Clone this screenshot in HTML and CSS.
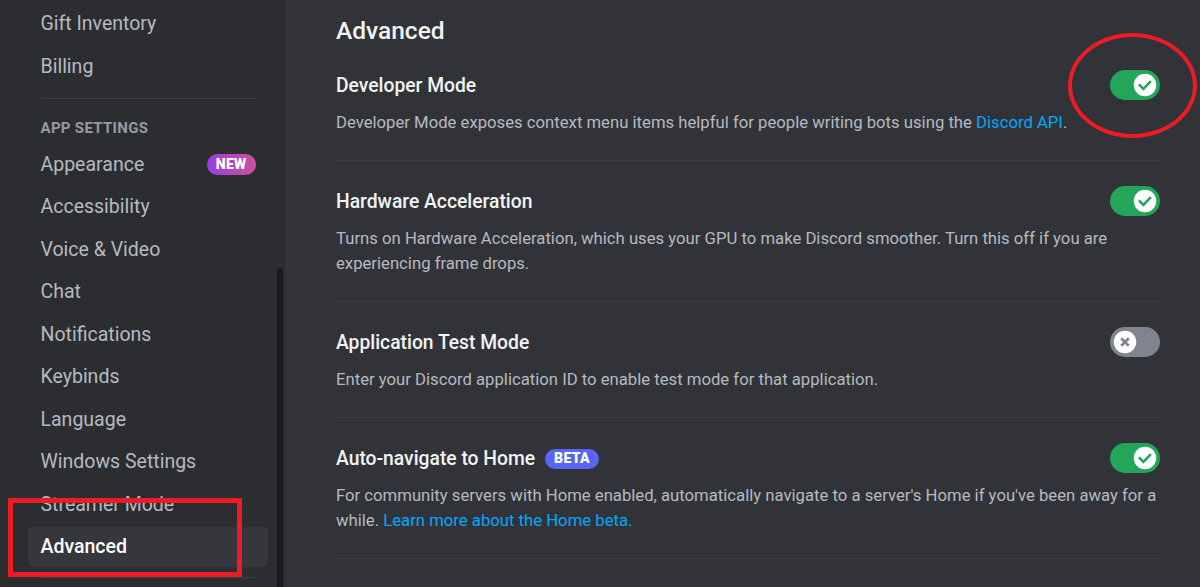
FILE: index.html
```html
<!DOCTYPE html>
<html lang="en">
<head>
<meta charset="utf-8">
<title>Settings - Advanced</title>
<link rel="stylesheet" href="styles.css">
</head>
<body>
<div class="app">
  <aside class="sidebar">
    <nav class="nav">
      <div class="item">Gift Inventory</div>
      <div class="item">Billing</div>
      <div class="sep first"></div>
      <div class="header">App Settings</div>
      <div class="item">Appearance <span class="badge-new">NEW</span></div>
      <div class="item">Accessibility</div>
      <div class="item">Voice &amp; Video</div>
      <div class="item">Chat</div>
      <div class="item">Notifications</div>
      <div class="item">Keybinds</div>
      <div class="item">Language</div>
      <div class="item">Windows Settings</div>
      <div class="item">Streamer Mode</div>
      <div class="item selected">Advanced</div>
      <div class="sep"></div>
    </nav>
    <div class="scroll"><div class="thumb"></div></div>
  </aside>
  <main class="content">
    <div class="column">
      <h2 class="title">Advanced</h2>

      <section class="setting">
        <div class="row">
          <div class="label">Developer Mode</div>
          <svg class="switch on" viewBox="0 0 40 24" width="50" height="30"><rect x="0" y="0" width="40" height="24" rx="12"/><circle cx="28" cy="12" r="9" fill="#fff"/><path d="M23.8 12.2l2.9 2.9 5.3-5.5" fill="none" stroke="#23a55a" stroke-width="2" stroke-linecap="square"/></svg>
        </div>
        <div class="desc">Developer Mode exposes context menu items helpful for people writing bots using the <a class="link">Discord API</a>.</div>
      </section>

      <section class="setting">
        <div class="row">
          <div class="label">Hardware Acceleration</div>
          <svg class="switch on" viewBox="0 0 40 24" width="50" height="30"><rect x="0" y="0" width="40" height="24" rx="12"/><circle cx="28" cy="12" r="9" fill="#fff"/><path d="M23.8 12.2l2.9 2.9 5.3-5.5" fill="none" stroke="#23a55a" stroke-width="2" stroke-linecap="square"/></svg>
        </div>
        <div class="desc">Turns on Hardware Acceleration, which uses your GPU to make Discord smoother. Turn this off if you are experiencing frame drops.</div>
      </section>

      <section class="setting">
        <div class="row">
          <div class="label">Application Test Mode</div>
          <svg class="switch off" viewBox="0 0 40 24" width="50" height="30"><rect x="0" y="0" width="40" height="24" rx="12"/><circle cx="12" cy="12" r="9" fill="#fff"/><path d="M9 9l6 6M15 9l-6 6" fill="none" stroke="#80848e" stroke-width="2.2"/></svg>
        </div>
        <div class="desc">Enter your Discord application ID to enable test mode for that application.</div>
      </section>

      <section class="setting">
        <div class="row">
          <div class="label">Auto-navigate to Home <span class="badge-beta">BETA</span></div>
          <svg class="switch on" viewBox="0 0 40 24" width="50" height="30"><rect x="0" y="0" width="40" height="24" rx="12"/><circle cx="28" cy="12" r="9" fill="#fff"/><path d="M23.8 12.2l2.9 2.9 5.3-5.5" fill="none" stroke="#23a55a" stroke-width="2" stroke-linecap="square"/></svg>
        </div>
        <div class="desc"><span>For community servers with Home enabled, automatically navigate to a server's Home if you've been away for a</span> <span>while.</span> <a class="link">Learn more about the Home beta.</a></div>
      </section>
    </div>
  </main>
  <div class="mark-rect"></div>
  <div class="mark-ellipse"></div>
</div>
</body>
</html>
```

FILE: styles.css
```css
* { box-sizing: border-box; }
html, body {
  margin: 0;
  padding: 0;
  width: 1200px;
  height: 587px;
  overflow: hidden;
  background: #313338;
  font-family: Roboto, "Noto Sans", sans-serif;
}
.app {
  position: relative;
  display: flex;
  width: 1200px;
  height: 587px;
}
.sidebar {
  display: flex;
  width: 285px;
  flex: 0 0 285px;
  background: #2b2d31;
}
.nav {
  width: 240px;
  margin-left: 28px;
  padding-top: 3.5px;
}
.item {
  display: flex;
  align-items: center;
  justify-content: space-between;
  height: 40px;
  margin-bottom: 2.5px;
  padding: 0 12.5px;
  border-radius: 5px;
  font-size: 19.5px;
  line-height: 25px;
  color: #b5bac1;
}
.item.selected {
  background: #36373d;
  color: #ffffff;
  font-weight: 500;
}
.sep {
  height: 1px;
  margin: 10px 12.5px;
  background: #3d3f45;
}
.sep.first {
  margin-top: 12px;
}
.header {
  padding: 9px 12.5px 6px;
  font-size: 15px;
  line-height: 20px;
  font-weight: 700;
  text-transform: uppercase;
  letter-spacing: 0.02em;
  color: #949ba4;
}
.badge-new {
  display: inline-flex;
  align-items: center;
  height: 21px;
  padding: 0 9px;
  border-radius: 11px;
  background: linear-gradient(90deg, #9a3ee2, #c9529a);
  color: #fff;
  font-size: 14px;
  font-weight: 900;
  letter-spacing: 0.02em;
}
.scroll {
  width: 6px;
  margin-left: 9px;
  display: flex;
  flex-direction: column;
}
.thumb {
  margin-top: 268px;
  flex: 1;
  background: #1a1b1e;
  border-radius: 3px 3px 0 0;
}
.content {
  flex: 1;
  padding-left: 51px;
}
.column {
  width: 824px;
}
.title {
  margin: 16px 0 24px;
  font-size: 24.5px;
  line-height: 30px;
  font-weight: 500;
  color: #f2f3f5;
}
.setting {
  padding-bottom: 25px;
  margin-bottom: 25px;
  border-bottom: 1px solid #3d3f45;
}
.row {
  display: flex;
  align-items: center;
  justify-content: space-between;
  height: 30px;
}
.label {
  display: flex;
  align-items: center;
  padding-top: 1px;
  font-size: 19.3px;
  line-height: 25px;
  font-weight: 500;
  color: #f2f3f5;
}
.badge-beta {
  display: inline-flex;
  align-items: center;
  height: 20px;
  margin-left: 10px;
  padding: 0 9px;
  border-radius: 10px;
  background: #5865f2;
  color: #fff;
  font-size: 14px;
  font-weight: 900;
  letter-spacing: 0.02em;
}
.desc {
  margin-top: 10px;
  font-size: 16.7px;
  line-height: 25px;
  color: #b5bac1;
}
.link { color: #00a8fc; }
.switch { display: block; flex: 0 0 auto; }
.switch.on rect { fill: #23a55a; }
.switch.off rect { fill: #80848e; }
.mark-rect {
  position: absolute;
  left: 8px;
  top: 498px;
  width: 234px;
  height: 79px;
  border: 5px solid #ed1c24;
}
.mark-ellipse {
  position: absolute;
  left: 1068px;
  top: 33px;
  width: 129px;
  height: 105px;
  border: 4px solid #ed1c24;
  border-radius: 50%;
}
```
